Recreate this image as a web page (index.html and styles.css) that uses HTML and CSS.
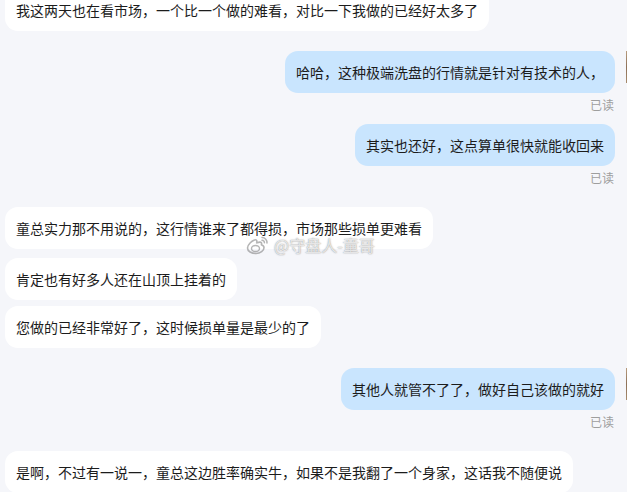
FILE: index.html
```html
<!DOCTYPE html>
<html lang="zh-CN">
<head>
<meta charset="utf-8">
<title>聊天记录</title>
<link rel="stylesheet" href="styles.css">
</head>
<body>
<div class="chat">
  <div class="row left first"><div class="bubble">我这两天也在看市场，一个比一个做的难看，对比一下我做的已经好太多了</div></div>

  <div class="row right side-change">
    <div class="msg">
      <div class="bubble mine">哈哈，这种极端洗盘的行情就是针对有技术的人，</div>
      <div class="read">已读</div>
    </div>
    <div class="avatar"></div>
  </div>

  <div class="row right same">
    <div class="msg">
      <div class="bubble mine">其实也还好，这点算单很快就能收回来</div>
      <div class="read">已读</div>
    </div>
    <div class="avatar-space"></div>
  </div>

  <div class="row left side-change-after-read"><div class="bubble">童总实力那不用说的，这行情谁来了都得损，市场那些损单更难看</div></div>
  <div class="row left same-left"><div class="bubble">肯定也有好多人还在山顶上挂着的</div></div>
  <div class="row left same-left tight"><div class="bubble">您做的已经非常好了，这时候损单量是最少的了</div></div>

  <div class="row right side-change">
    <div class="msg">
      <div class="bubble mine">其他人就管不了了，做好自己该做的就好</div>
      <div class="read">已读</div>
    </div>
    <div class="avatar"></div>
  </div>

  <div class="row left side-change-after-read"><div class="bubble">是啊，不过有一说一，童总这边胜率确实牛，如果不是我翻了一个身家，这话我不随便说</div></div>

  <div class="watermark">
    <svg class="wb" width="24" height="20" viewBox="0 0 24 20" aria-hidden="true">
      <path d="M10 18.5c-4.6 0-8.5-2.2-8.5-5.4 0-1.7 1-3.6 2.8-5.4 2.4-2.4 5.200-3.5 6.2-2.5.5.5.5 1.300.2 2.3-.2.5.4.3.4.3 2-.8 3.7-.9 4.3 0 .3.5.3 1.1 0 1.8-.1.4.1.4.3.5 1.1.3 2.3 1.2 2.3 2.6 0 2.6-3.6 5.8-8 5.8z" fill="none" stroke="rgba(120,120,120,.55)" stroke-width="1.6"/>
      <ellipse cx="9.5" cy="13.5" rx="4" ry="3" fill="none" stroke="rgba(120,120,120,.55)" stroke-width="1.4"/>
      <path d="M16 2.5a5 5 0 0 1 5 5.5M16 5.2a2.4 2.4 0 0 1 2.4 2.6" fill="none" stroke="rgba(120,120,120,.55)" stroke-width="1.5" stroke-linecap="round"/>
    </svg>
    <span class="wm-text">@守盘人-童哥</span>
  </div>
</div>
</body>
</html>
```

FILE: styles.css
```css
html, body {
  margin: 0;
  padding: 0;
  background: #f5f6fa;
  overflow: hidden;
}

body {
  width: 627px;
  height: 492px;
  font-family: "Noto Sans CJK SC", "Noto Sans", sans-serif;
  color: #1c1c1c;
}

.chat {
  position: relative;
  display: flex;
  flex-direction: column;
  margin-top: -11px;
  padding: 0 0 0 5px;
}

.row {
  display: flex;
  align-items: flex-start;
}

.row.left {
  justify-content: flex-start;
}

.row.right {
  justify-content: flex-end;
}

.row.first { margin-top: 0; }
.row.side-change { margin-top: 20px; }
.row.same { margin-top: 12px; }
.row.side-change-after-read { margin-top: 22px; }
.row.same-left { margin-top: 9px; }
.row.same-left.tight { margin-top: 6px; }

.msg {
  display: flex;
  flex-direction: column;
  align-items: flex-end;
}

.bubble {
  background: #ffffff;
  border-radius: 13px;
  padding: 11px 11px;
  font-size: 14px;
  line-height: 20px;
  white-space: nowrap;
}

.bubble.mine {
  background: #c9e5fe;
}

.read {
  margin-top: 5px;
  margin-right: 1px;
  font-size: 12px;
  line-height: 14px;
  color: #9e9e9e;
}

.avatar,
.avatar-space {
  flex: none;
  width: 1px;
  height: 32px;
  margin-left: 11px;
}

.avatar {
  background: linear-gradient(180deg, #b89c7e 0%, #8d7159 50%, #a78b6d 100%);
}

.watermark {
  position: absolute;
  left: 246px;
  top: 246px;
  display: flex;
  align-items: center;
  gap: 4px;
}

.wm-text {
  font-family: "Noto Sans CJK SC", sans-serif;
  font-size: 16px;
  line-height: 20px;
  color: rgba(255, 255, 255, 0.75);
  text-shadow: 0 0 1px rgba(80, 80, 80, 0.55), 0 0 2px rgba(80, 80, 80, 0.3);
}
```
